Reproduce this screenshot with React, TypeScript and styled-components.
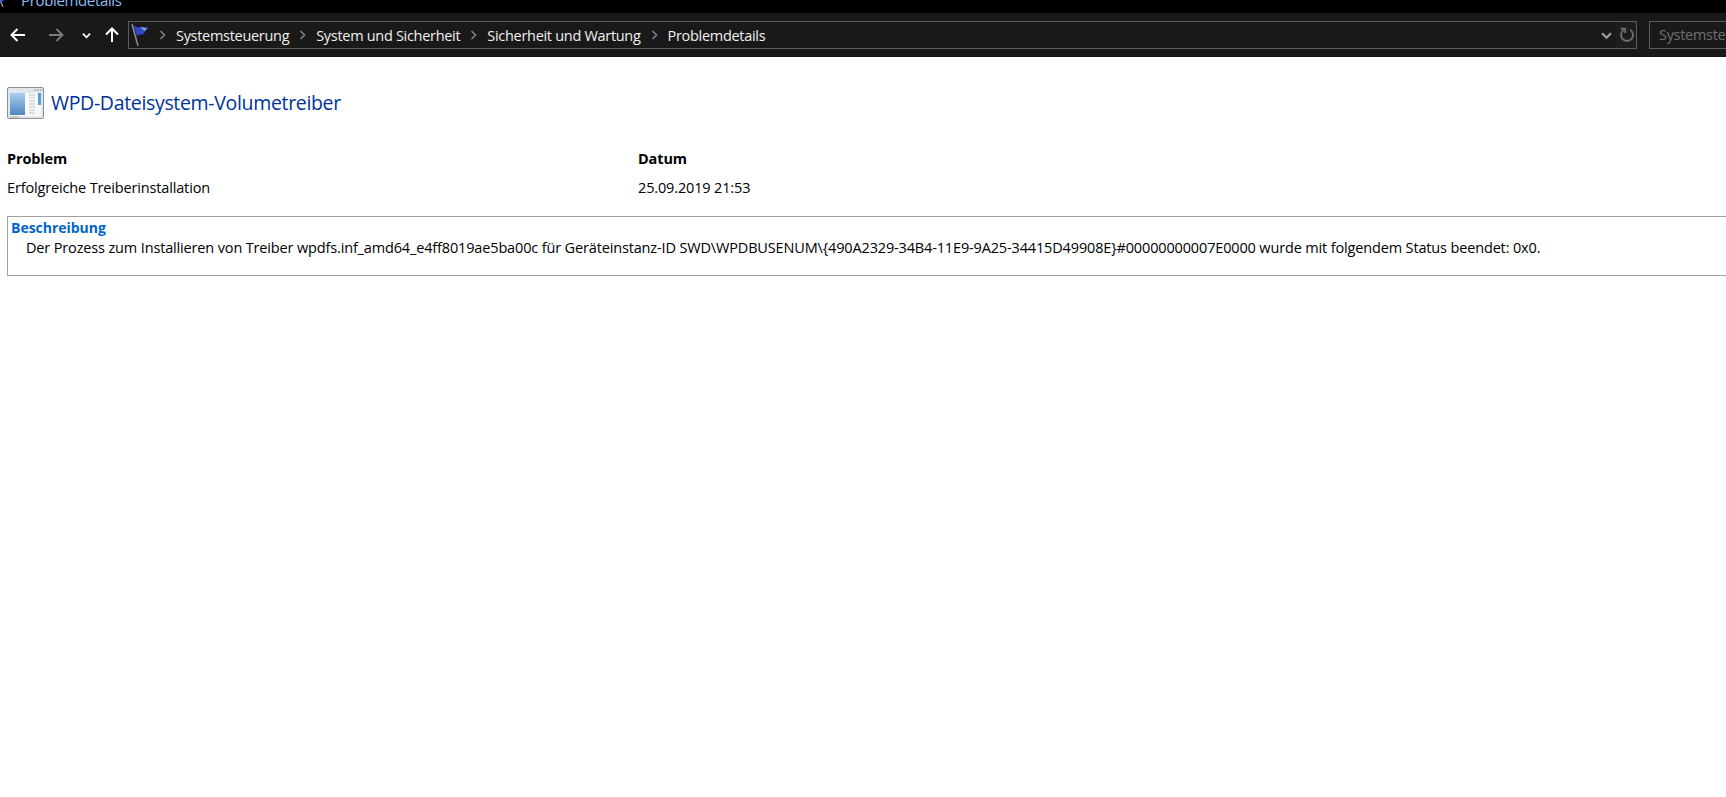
import { Fragment } from "react";
import styled, { createGlobalStyle } from "styled-components";

const GlobalStyle = createGlobalStyle`
  html, body {
    margin: 0;
    padding: 0;
    height: 100%;
    background: #fff;
    overflow: hidden;
  }
  body {
    font-family: "Open Sans", "Noto Sans", "Liberation Sans", sans-serif;
  }
`;

const Page = styled.div`
  width: 1726px;
  height: 797px;
  overflow: hidden;
  background: #fff;
`;

const TitleBar = styled.div`
  height: 13px;
  background: #000;
  display: flex;
  align-items: flex-end;
  overflow: hidden;
`;

const TitleIcon = styled.div`
  width: 21px;
  height: 13px;
  flex-shrink: 0;
`;

const TitleText = styled.span`
  color: #8dbdf2;
  font-size: 15px;
  line-height: 20px;
  margin-bottom: 3px;
  letter-spacing: -0.35px;
`;

const NavBar = styled.div`
  height: 44px;
  background: #191919;
  display: flex;
  align-items: center;
  padding-left: 7px;
`;

const NavButton = styled.button<{ $w: number; $gap?: number }>`
  width: ${(p) => p.$w}px;
  height: 28px;
  margin-left: ${(p) => p.$gap ?? 0}px;
  padding: 0;
  flex-shrink: 0;
  border: 0;
  background: none;
  display: flex;
  align-items: center;
  justify-content: center;
`;

const AddressBox = styled.div`
  width: 1509px;
  height: 28px;
  flex-shrink: 0;
  box-sizing: border-box;
  margin-left: 5px;
  border: 1px solid #5c5c5c;
  display: flex;
  align-items: center;
`;

const Crumbs = styled.div`
  flex: 1;
  display: flex;
  align-items: center;
`;

const Crumb = styled.span`
  color: #f0f0f0;
  font-size: 14.5px;
  letter-spacing: -0.3px;
  white-space: nowrap;
`;

const Separator = styled.span`
  width: 27px;
  display: flex;
  justify-content: center;
`;

const HistoryToggle = styled.span`
  display: flex;
  margin-right: 4px;
`;

const RefreshCell = styled.div`
  width: 20px;
  height: 26px;
  padding-left: 2px;
  box-sizing: border-box;
  display: flex;
  align-items: center;
  justify-content: center;
  background: #1e1e1e;
`;

const SearchBox = styled.div`
  width: 90px;
  height: 28px;
  flex-shrink: 0;
  box-sizing: border-box;
  margin-left: 12px;
  padding-left: 9px;
  border: 1px solid #5c5c5c;
  border-right: 0;
  color: #6f6f6f;
  font-size: 14.5px;
  letter-spacing: -0.3px;
  line-height: 26px;
  white-space: nowrap;
  overflow: hidden;
`;

const Content = styled.main`
  padding: 30px 0 0 7px;
`;

const Heading = styled.div`
  display: flex;
  align-items: center;
  gap: 7px;
  height: 32px;
`;

const HeadingText = styled.h1`
  margin: 0;
  color: #003399;
  font-size: 19.5px;
  font-weight: 400;
  letter-spacing: -0.33px;
  line-height: 32px;
`;

const InfoGrid = styled.div`
  display: grid;
  grid-template-columns: 631px 1fr;
  grid-auto-rows: 29px;
  align-items: center;
  margin-top: 25px;
`;

const Label = styled.div`
  color: #000;
  font-size: 14.5px;
  font-weight: 700;
  letter-spacing: -0.13px;
`;

const Value = styled.div`
  color: #000;
  font-size: 14.5px;
  letter-spacing: -0.15px;
`;

const DescriptionBox = styled.section`
  width: 1760px;
  height: 60px;
  box-sizing: border-box;
  margin-top: 14px;
  padding: 2px 0 0 3px;
  border: 1px solid #a0a0a0;
`;

const DescriptionTitle = styled.div`
  color: #0066cc;
  font-size: 14px;
  font-weight: 700;
  letter-spacing: -0.02px;
  line-height: 18px;
`;

const DescriptionText = styled.div`
  padding-left: 15px;
  color: #000;
  font-size: 14.5px;
  letter-spacing: -0.15px;
  line-height: 21px;
  white-space: nowrap;
`;

const Arrow = ({ dir, color }: { dir: "left" | "right" | "up"; color: string }) => {
  const rotate = dir === "left" ? 0 : dir === "right" ? 180 : 90;
  return (
    <svg width="16" height="16" viewBox="0 0 16 16" style={{ transform: `rotate(${rotate}deg)` }}>
      <path d="M1 8h14M7.5 2 1.5 8l6 6" fill="none" stroke={color} strokeWidth="2" />
    </svg>
  );
};

const Chevron = ({ color, size = 9 }: { color: string; size?: number }) => (
  <svg width={size} height={size} viewBox="0 0 10 10">
    <path d="M1 3l4 4 4-4" fill="none" stroke={color} strokeWidth="2" />
  </svg>
);

const CrumbArrow = () => (
  <svg width="7" height="10" viewBox="0 0 7 10">
    <path d="M1.5 1l4 4-4 4" fill="none" stroke="#808080" strokeWidth="1.6" />
  </svg>
);

const Refresh = () => (
  <svg width="16" height="16" viewBox="0 0 16 16">
    <path d="M5 2.8A6 6 0 1 0 11 2.8" fill="none" stroke="#6e6e6e" strokeWidth="1.8" />
    <path d="M1.8 1.6h4.4v4.4" fill="none" stroke="#6e6e6e" strokeWidth="1.8" />
  </svg>
);

const Flag = () => (
  <svg width="20" height="25" viewBox="0 0 20 25" style={{ flexShrink: 0 }}>
    <path d="M3 1l6 22" stroke="#8d8f8f" strokeWidth="1.5" />
    <path d="M4 2c3 2 5 3 7 2l8 1c-2 1-3 3-4 6-3 0-5 1-7 2z" fill="#2f45c4" />
    <path d="M11 4l8 1c-2 1-2 2-3 3-2-1-3-2-5-4z" fill="#7f97ec" />
  </svg>
);

const SmallFlag = () => (
  <svg width="6" height="7" viewBox="0 0 6 7" style={{ display: "block" }}>
    <path d="M0 0l3 7" stroke="#a8a8a8" strokeWidth="1.2" />
    <path d="M0 0h4L1 3z" fill="#3a55d0" />
  </svg>
);

const WindowIcon = () => (
  <svg width="37" height="33" viewBox="0 0 37 33">
    <defs>
      <linearGradient id="pane" x1="0" y1="0" x2="0" y2="1">
        <stop offset="0" stopColor="#a9d0ee" />
        <stop offset="1" stopColor="#4f86c2" />
      </linearGradient>
    </defs>
    <rect x="0.5" y="0.5" width="36" height="31" rx="1.5" fill="#e4e7ea" stroke="#8b8f93" />
    <rect x="3" y="6" width="31" height="23" fill="#f7f8f9" />
    <rect x="3" y="6" width="15" height="22" fill="url(#pane)" />
    <path d="M22 8h6M22 11h6M22 14h6M22 17h6M22 20h6M22 23h6M22 26h6" stroke="#d2d5d8" strokeWidth="1.6" />
    <rect x="31" y="6" width="3" height="12" fill="#5b9bd5" />
    <path d="M27 3h2M30 3h2M33 3h2" stroke="#8a9199" strokeWidth="1.2" />
    <path d="M3 30h9" stroke="#bfc3c7" strokeWidth="1.6" />
  </svg>
);

const crumbs = ["Systemsteuerung", "System und Sicherheit", "Sicherheit und Wartung", "Problemdetails"];

export default function App() {
  return (
    <Page>
      <GlobalStyle />
      <TitleBar>
        <TitleIcon>
          <SmallFlag />
        </TitleIcon>
        <TitleText>Problemdetails</TitleText>
      </TitleBar>
      <NavBar>
        <NavButton $w={22}>
          <Arrow dir="left" color="#ffffff" />
        </NavButton>
        <NavButton $w={34} $gap={10}>
          <Arrow dir="right" color="#7a7a7a" />
        </NavButton>
        <NavButton $w={12} $gap={7}>
          <Chevron color="#ffffff" />
        </NavButton>
        <NavButton $w={22} $gap={9}>
          <Arrow dir="up" color="#ffffff" />
        </NavButton>
        <AddressBox>
          <Flag />
          <Crumbs>
            {crumbs.map((c) => (
              <Fragment key={c}>
                <Separator>
                  <CrumbArrow />
                </Separator>
                <Crumb>{c}</Crumb>
              </Fragment>
            ))}
          </Crumbs>
          <HistoryToggle>
            <Chevron color="#a0a0a0" size={11} />
          </HistoryToggle>
          <RefreshCell>
            <Refresh />
          </RefreshCell>
        </AddressBox>
        <SearchBox>Systemste</SearchBox>
      </NavBar>
      <Content>
        <Heading>
          <WindowIcon />
          <HeadingText>WPD-Dateisystem-Volumetreiber</HeadingText>
        </Heading>
        <InfoGrid>
          <Label>Problem</Label>
          <Label>Datum</Label>
          <Value>Erfolgreiche Treiberinstallation</Value>
          <Value>25.09.2019 21:53</Value>
        </InfoGrid>
        <DescriptionBox>
          <DescriptionTitle>Beschreibung</DescriptionTitle>
          <DescriptionText>
            Der Prozess zum Installieren von Treiber wpdfs.inf_amd64_e4ff8019ae5ba00c für Geräteinstanz-ID SWD\WPDBUSENUM\{"{"}490A2329-34B4-11E9-9A25-34415D49908E{"}"}#00000000007E0000 wurde mit folgendem Status beendet: 0x0.
          </DescriptionText>
        </DescriptionBox>
      </Content>
    </Page>
  );
}
